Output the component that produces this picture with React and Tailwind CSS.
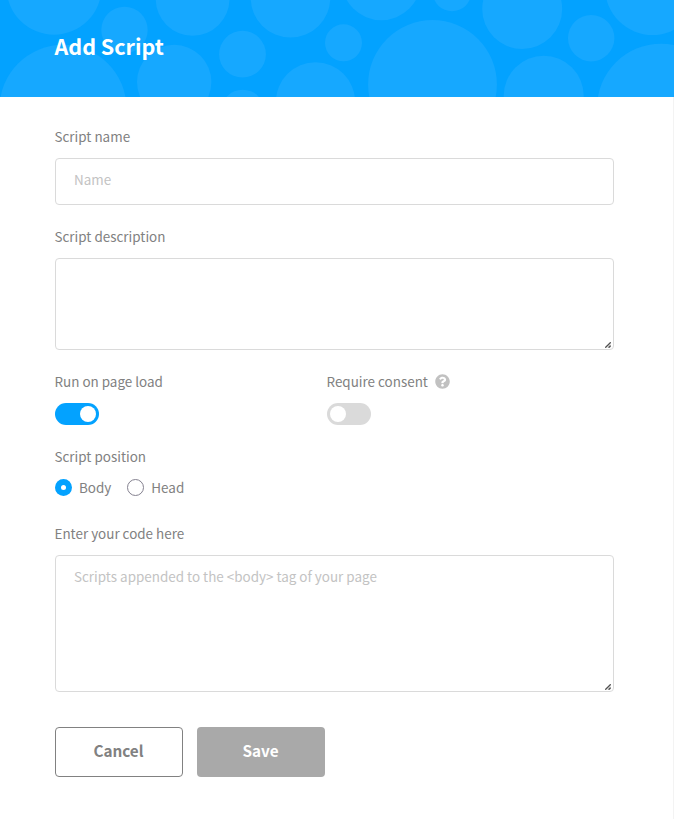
import React, { useState } from 'react';

const BUBBLES = [
  [54, -12.8, 47.5],
  [124.5, 30, 23.2],
  [192.6, -1.2, 36.9],
  [290.5, -2.2, 39.8],
  [242.5, 54.2, 23.4],
  [343.5, 42.8, 18.5],
  [63, 108.3, 63.5],
  [174.2, 82, 37.2],
  [242.7, 111.7, 22],
  [315.5, 101.8, 39.6],
  [381.3, -19.5, 39.7],
  [452, -8, 19.3],
  [432.5, 84.5, 64.4],
  [522.2, 9, 40],
  [591.2, 38.2, 23.2],
  [543.7, 95.7, 40],
  [652.5, -12.5, 47.5],
  [661, 107.7, 64],
];

const Grip = () => (
  <svg className="absolute right-[3px] bottom-[2px] h-[6px] w-[6px]" viewBox="0 0 6 6" fill="none">
    <path d="M2 5.5L5.5 2V5.5z" fill="#d0d0d0" />
    <path d="M0.3 5.7l5.4-5.4M3.6 5.7l2.1-2.1" stroke="#505050" strokeWidth="1.3" />
  </svg>
);

const Toggle = ({ on, onChange }) => (
  <button
    type="button"
    role="switch"
    aria-checked={on}
    onClick={() => onChange(!on)}
    className={`flex h-[22px] w-11 items-center rounded-full px-[3px] ${on ? 'justify-end bg-[#03a2ff]' : 'justify-start bg-[#dadada]'}`}
  >
    <span className="size-4 rounded-full bg-white" />
  </button>
);

const Radio = ({ label, checked, onChange }) => (
  <label className="flex items-center">
    <input type="radio" name="position" className="sr-only" checked={checked} onChange={onChange} />
    <span
      className={`flex size-[17px] items-center justify-center rounded-full ${checked ? 'bg-[#03a2ff]' : 'border border-[#84818f]'}`}
    >
      {checked && <span className="size-[5px] rounded-full bg-white" />}
    </span>
    <span className="ml-[7.5px]">{label}</span>
  </label>
);

export default function App() {
  const [runOnLoad, setRunOnLoad] = useState(true);
  const [consent, setConsent] = useState(false);
  const [position, setPosition] = useState('Body');

  return (
    <div className="h-[819px] w-[674px] overflow-hidden bg-white font-['Noto_Sans_CJK_SC','Source_Sans_Pro',sans-serif] text-[13.45px] leading-5 text-[#818181]">
      <header className="relative h-[97px] overflow-hidden bg-[#03a2ff]">
        <svg className="absolute inset-0" width="674" height="97">
          {BUBBLES.map(([cx, cy, r]) => (
            <circle key={`${cx}-${cy}`} cx={cx} cy={cy} r={r} fill="#16a8ff" />
          ))}
        </svg>
        <h1 className="relative pt-[31px] pl-[54.5px] text-[21.5px] leading-[30px] font-bold text-white">Add Script</h1>
      </header>

      <form className="h-[722px] border-r border-[#f3f3f3] pt-[29px] pr-[59px] pl-[55px]">
        <label className="-ml-[0.5px] block h-5">Script name</label>
        <input
          className="mt-3 block h-[47px] w-[559px] rounded-[4px] border border-[#dadada] px-[18px] pb-[5px] outline-none placeholder:text-[#c3c3c3]"
          placeholder="Name"
        />

        <label className="mt-[21px] -ml-[0.5px] block h-5">Script description</label>
        <div className="relative mt-3 h-[92px] w-[559px]">
          <textarea className="block size-full resize-none rounded-[4px] border border-[#dadada] px-[18px] py-3 outline-none" />
          <Grip />
        </div>

        <div className="mt-[21px] flex">
          <div className="w-[272px]">
            <div className="mb-3 -ml-[0.5px] h-5">Run on page load</div>
            <Toggle on={runOnLoad} onChange={setRunOnLoad} />
          </div>
          <div>
            <div className="mb-3 -ml-[0.5px] flex h-5 items-center">
              Require consent
              <svg className="ml-[7px] size-[15px]" viewBox="0 0 512 512" fill="#c1c1c1">
                <path d="M504 256c0 137-111 248-248 248S8 393 8 256C8 119 119 8 256 8s248 111 248 248zM262.7 90c-54.5 0-89.3 23-116.5 63.8-3.5 5.3-2.4 12.4 2.7 16.3l34.7 26.3c5.2 3.9 12.6 3 16.7-2.1 17.9-22.7 30.1-35.8 57.3-35.8 20.4 0 45.7 13.1 45.7 33 0 15-12.4 22.7-32.5 34C247.1 238.5 216 254.9 216 296v4c0 6.6 5.4 12 12 12h56c6.6 0 12-5.4 12-12v-1.3c0-28.5 83.2-29.6 83.2-106.7 0-58-60.2-102-116.5-102zM256 338c-25.4 0-46 20.6-46 46s20.6 46 46 46 46-20.6 46-46-20.6-46-46-46z" />
              </svg>
            </div>
            <Toggle on={consent} onChange={setConsent} />
          </div>
        </div>

        <div className="mt-[21px] -ml-[0.5px] h-5">Script position</div>
        <div className="mt-[11px] -ml-[0.5px] flex h-5 items-center gap-[15.5px]">
          <Radio label="Body" checked={position === 'Body'} onChange={() => setPosition('Body')} />
          <Radio label="Head" checked={position === 'Head'} onChange={() => setPosition('Head')} />
        </div>

        <label className="mt-[26px] -ml-[0.5px] block h-5">Enter your code here</label>
        <div className="relative mt-3 h-[137px] w-[559px]">
          <textarea
            className="block size-full resize-none rounded-[4px] border border-[#dadada] px-[18px] py-[10px] outline-none placeholder:text-[#c3c3c3]"
            placeholder="Scripts appended to the <body> tag of your page"
          />
          <Grip />
        </div>

        <div className="mt-[35px] flex gap-[14px] text-[15.3px] font-bold">
          <button type="button" className="h-[50px] w-32 rounded-[4px] border border-[#818181] pr-[1px] pb-[5px]">
            Cancel
          </button>
          <button type="button" className="h-[50px] w-32 rounded-[4px] bg-[#a9a9a9] pr-[1px] pb-[5px] text-white">
            Save
          </button>
        </div>
      </form>
    </div>
  );
}
